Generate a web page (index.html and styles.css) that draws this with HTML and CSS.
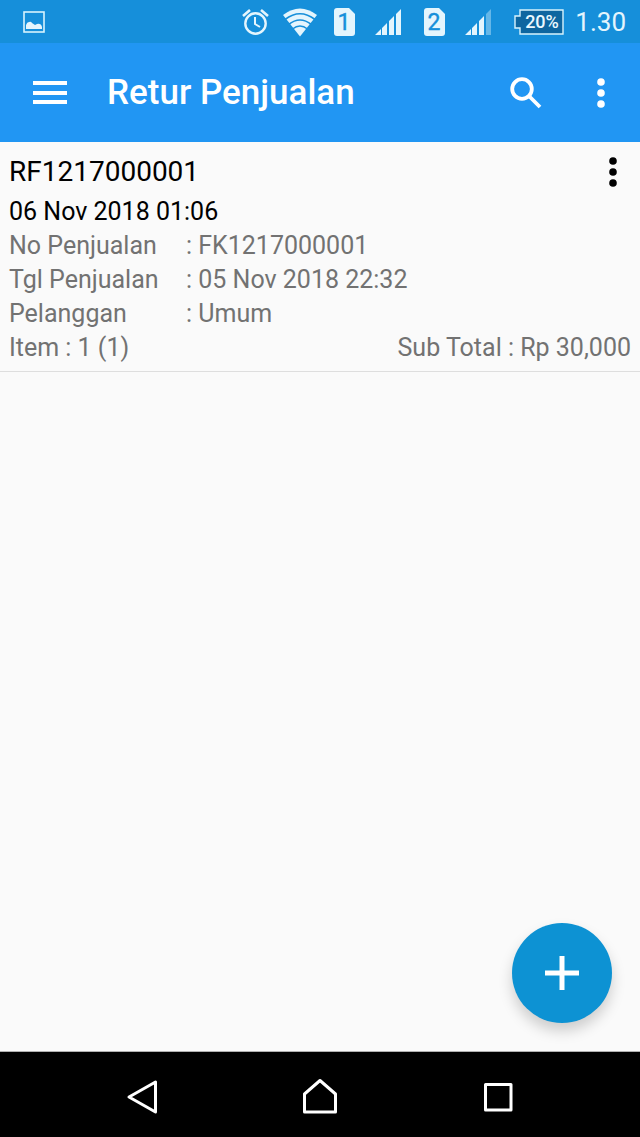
FILE: index.html
```html
<!DOCTYPE html>
<html lang="id">
<head>
<meta charset="utf-8">
<meta name="viewport" content="width=device-width, initial-scale=1">
<title>Retur Penjualan</title>
<link rel="stylesheet" href="styles.css">
</head>
<body>
<div class="screen">
  <div class="status-bar">
    <svg class="picture" width="22" height="22" viewBox="0 0 22 22" aria-hidden="true">
      <rect x="1" y="1" width="20" height="20" fill="none" stroke="#d8f3fd" stroke-width="1.6"/>
      <path d="M3 18V14Q4 11 6 11Q8 10 9 12L12 14L14 13Q18 12 19 16V18Z" fill="#e4f5fd"/>
    </svg>
    <div class="status-icons">
      <svg width="27" height="28" viewBox="0 0 27 28" fill="none" stroke="#e4f5fd" aria-hidden="true">
        <circle cx="13.500" cy="15.500" r="10.200" stroke-width="2.400"/>
        <path d="M13 9V16L18 19" stroke-width="2"/>
        <path d="M1 8L8 2M26 8L19 2" stroke-width="2.600"/>
      </svg>
      <svg class="wifi" width="36" height="30" viewBox="0 0 36 30" aria-hidden="true">
        <path d="M18 29.500L1 8Q18 -5 35 8Z" fill="#e4f5fd"/>
        <path d="M3 12.500Q18 1 33 12.500M6.500 17.500Q18 8.500 29.500 17.500M10.500 22Q18 16 25.500 22" fill="none" stroke="#168fda" stroke-width="1.600"/>
      </svg>
      <svg class="sim" width="23" height="30" viewBox="0 0 23 30" role="img" aria-label="SIM 1">
        <path d="M4 1H16L22 7V26Q22 29 19 29H4Q1 29 1 26V4Q1 1 4 1Z" fill="#e4f5fd"/>
        <text class="sim-number" x="11" y="23" text-anchor="middle">1</text>
      </svg>
      <svg class="signal" width="27" height="28" viewBox="0 0 27 28" fill="#e4f5fd" aria-hidden="true">
        <path d="M0 27L6 21V27ZM7 20L12 15V27H7ZM14 13L19 8V27H14ZM21 6L26 1V27H21Z"/>
      </svg>
      <svg class="sim" width="23" height="30" viewBox="0 0 23 30" role="img" aria-label="SIM 2">
        <path d="M4 1H16L22 7V26Q22 29 19 29H4Q1 29 1 26V4Q1 1 4 1Z" fill="#e4f5fd"/>
        <text class="sim-number" x="11" y="23" text-anchor="middle">2</text>
      </svg>
      <svg class="signal" width="27" height="28" viewBox="0 0 27 28" fill="#e4f5fd" aria-hidden="true">
        <path d="M0 27L6 21V27ZM7 20L12 15V27H7ZM14 13L19 8V27H14Z"/>
        <path d="M21 6L26 1V27H21Z" fill="#65b7e8"/>
      </svg>
      <svg class="battery" width="50" height="26" viewBox="0 0 50 26" role="img" aria-label="Baterai 20%">
        <path d="M6 1H49V25H6V19H1V7H6Z" fill="#0e66a0" stroke="#d8f3fd" stroke-width="1.400"/>
        <text class="battery-level" x="28" y="19" text-anchor="middle">20%</text>
      </svg>
      <span class="clock">1.30</span>
    </div>
  </div>

  <header class="app-bar">
    <button class="icon-button" type="button" aria-label="Menu">
      <svg width="34" height="24" viewBox="0 0 34 24" fill="#fff"><path d="M0 0H34V4H0ZM0 10H34V14H0ZM0 19H34V23H0Z"/></svg>
    </button>
    <h1 class="title">Retur Penjualan</h1>
    <button class="icon-button" type="button" aria-label="Cari">
      <svg width="32" height="32" viewBox="0 0 32 32" fill="none" stroke="#fff" stroke-width="3.800"><circle cx="12" cy="12" r="9.800"/><path d="M19.500 19.500L30 30"/></svg>
    </button>
    <button class="icon-button more" type="button" aria-label="Opsi lainnya">
      <svg width="8" height="30" viewBox="0 0 8 30" fill="#fff"><circle cx="4" cy="4" r="3.800"/><circle cx="4" cy="15" r="3.800"/><circle cx="4" cy="26" r="3.800"/></svg>
    </button>
  </header>

  <main class="content">
    <article class="entry">
      <div class="entry-head">
        <h2 class="entry-number">RF1217000001</h2>
        <button class="icon-button" type="button" aria-label="Opsi retur">
          <svg width="8" height="30" viewBox="0 0 8 30" fill="#000"><circle cx="4" cy="4" r="3.800"/><circle cx="4" cy="15" r="3.800"/><circle cx="4" cy="26" r="3.800"/></svg>
        </button>
      </div>
      <time class="entry-date" datetime="2018-11-06T01:06">06 Nov 2018 01:06</time>
      <dl class="details">
        <dt>No Penjualan</dt><dd>: FK1217000001</dd>
        <dt>Tgl Penjualan</dt><dd>: 05 Nov 2018 22:32</dd>
        <dt>Pelanggan</dt><dd>: Umum</dd>
      </dl>
      <div class="totals"><span>Item : 1 (1)</span><span>Sub Total : Rp 30,000</span></div>
    </article>
    <button class="fab" type="button" aria-label="Tambah retur">
      <svg width="34" height="34" viewBox="0 0 34 34" fill="#fff"><path d="M14.500 0H19.500V14.500H34V19.500H19.500V34H14.500V19.500H0V14.500H14.500Z"/></svg>
    </button>
  </main>

  <nav class="nav-bar" aria-label="Navigasi sistem">
    <button class="nav-button" type="button" aria-label="Kembali">
      <svg width="36" height="36" viewBox="0 0 36 36"><path d="M5 18L31.500 3V33Z"/></svg>
    </button>
    <button class="nav-button" type="button" aria-label="Beranda">
      <svg width="36" height="36" viewBox="0 0 36 36"><path d="M2.500 15L18 1.500L33.500 15V33H2.500Z"/></svg>
    </button>
    <button class="nav-button" type="button" aria-label="Aplikasi terbaru">
      <svg width="36" height="36" viewBox="0 0 36 36"><path d="M5.500 5.500H31V31H5.500Z"/></svg>
    </button>
  </nav>
</div>
</body>
</html>
```
FILE: styles.css
```css
* {
  box-sizing: border-box;
}

body {
  margin: 0;
  background: #fafafa;
  color: #000;
  font-family: Roboto, "Liberation Sans", sans-serif;
  font-size: 25px;
  line-height: 34px;
}

svg {
  display: block;
  flex-shrink: 0;
}

button {
  margin: 0;
  padding: 0;
  border: 0;
  background: none;
  cursor: pointer;
}

.screen {
  display: flex;
  flex-direction: column;
  min-height: 100vh;
}

.status-bar {
  display: flex;
  align-items: center;
  justify-content: space-between;
  height: 43px;
  padding: 0 14px 0 23px;
  background: #168fda;
}

.status-icons {
  display: flex;
  align-items: center;
}

.wifi {
  margin-left: 13px;
}

.sim {
  margin-left: 21px;
}

.wifi + .sim {
  margin-left: 15px;
}

.signal {
  margin-left: 19px;
}

.battery {
  margin-left: 22px;
}

.sim-number {
  fill: #168fda;
  font-size: 23px;
  font-weight: 400;
  stroke: #168fda;
  stroke-width: 0.4px;
}

.battery-level {
  fill: #e9f8ff;
  font-size: 18px;
  font-weight: 500;
}

.clock {
  margin-left: 11px;
  color: #e4f5fd;
  font-size: 26px;
}

.app-bar {
  display: flex;
  align-items: center;
  height: 99px;
  padding: 0 35px 0 33px;
  background: #2196f3;
}

.icon-button {
  display: flex;
  align-items: center;
  justify-content: center;
}

.title {
  flex: 1;
  margin: 0 0 0 40px;
  color: #fff;
  font-size: 35px;
  font-weight: 500;
  line-height: 44px;
}

.more {
  margin-left: 55px;
}

.content {
  position: relative;
  flex: 1;
}

.entry {
  padding: 6px 9px;
  border-bottom: 1px solid #dedede;
}

.entry-head {
  display: flex;
  align-items: center;
  justify-content: space-between;
  height: 47px;
  padding-right: 14px;
}

.entry-number {
  margin: 0;
  font-size: 28px;
  font-weight: 400;
}

.entry-date {
  display: block;
}

.details {
  display: grid;
  grid-template-columns: 177px 1fr;
  margin: 0;
  color: #727272;
}

.details dd {
  margin: 0;
}

.totals {
  display: flex;
  justify-content: space-between;
  color: #727272;
}

.fab {
  position: absolute;
  right: 28px;
  bottom: 28px;
  display: flex;
  align-items: center;
  justify-content: center;
  width: 100px;
  height: 100px;
  border-radius: 50%;
  background: #0d92d3;
  box-shadow: 0 8px 14px rgba(0, 0, 0, 0.18);
}

.nav-bar {
  display: flex;
  justify-content: center;
  gap: 142px;
  height: 86px;
  padding-top: 4px;
  border-top: 1px solid #b0b0b0;
  background: #000;
}

.nav-button {
  display: flex;
  align-items: center;
}

.nav-button svg {
  fill: none;
  stroke: #fff;
  stroke-width: 3px;
  stroke-linejoin: round;
}
```
